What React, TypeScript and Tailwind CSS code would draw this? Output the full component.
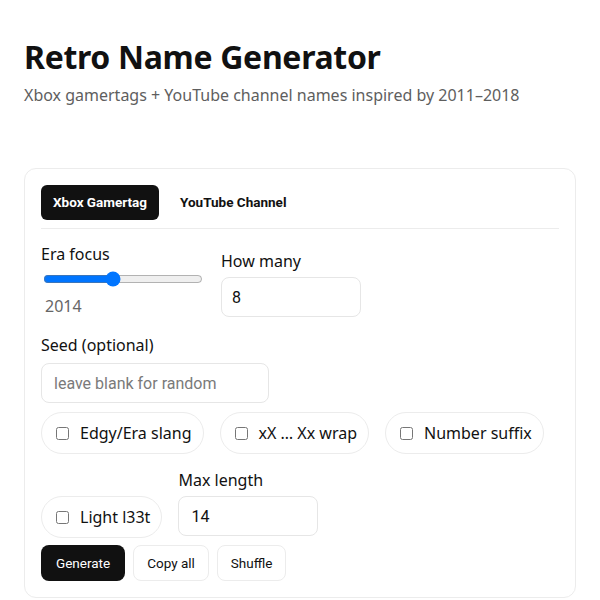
import { useState } from "react";

const pill =
  "flex items-center gap-[11px] rounded-full border border-[#ececec] bg-white py-2 pl-[14px] pr-[11px] text-base leading-6 text-[#111]";
const field =
  "h-10 rounded-lg border border-[#e6e6e6] bg-white px-3 text-base text-[#111] outline-none placeholder:text-[#7a7a7a] font-['Roboto',sans-serif]";

function Check({ label }: { label: string }) {
  return (
    <label className={pill}>
      <input type="checkbox" className="m-0 size-[13px]" />
      <span>{label}</span>
    </label>
  );
}

export default function App() {
  const [era, setEra] = useState(2014);
  const [tab, setTab] = useState("xbox");

  return (
    <main className="min-h-[600px] bg-white px-6 pt-[38px] font-['Noto_Sans',sans-serif] text-[#111]">
      <h1 className="text-[32px] leading-[38px] font-bold tracking-[-0.01em]">
        Retro Name Generator
      </h1>
      <p className="mt-[7px] text-base leading-6 text-[#5e5e5e]">
        Xbox gamertags + YouTube channel names inspired by 2011–2018
      </p>

      <section className="mt-[61px] rounded-xl border border-[#ececec] p-4">
        <div className="flex gap-[9px] border-b border-[#ececec] pb-2">
          {[
            ["xbox", "Xbox Gamertag"],
            ["yt", "YouTube Channel"],
          ].map(([id, name]) => (
            <button
              key={id}
              type="button"
              onClick={() => setTab(id)}
              className={
                "h-[35px] rounded-md px-3 font-['Roboto',sans-serif] text-[13.5px] font-bold " +
                (tab === id ? "bg-[#111] text-white" : "bg-transparent text-[#111]")
              }
            >
              {name}
            </button>
          ))}
        </div>

        <div className="mt-[13px] flex items-end gap-[18px]">
          <div className="flex flex-col">
            <span className="leading-6">Era focus</span>
            <input
              type="range"
              min={2011}
              max={2018}
              value={era}
              onChange={(e) => setEra(Number(e.target.value))}
              className="mt-[5px] ml-[2px] w-[160px]"
            />
            <span className="mt-[8px] ml-1 text-base leading-[22px] text-[#666]">{era}</span>
          </div>
          <div className="flex flex-col gap-[4px]">
            <span className="leading-6">How many</span>
            <input className={field + " w-[140px] px-[10px]"} defaultValue="8" />
          </div>
        </div>

        <div className="mt-[16px] flex flex-col gap-[6px]">
          <span className="leading-6">Seed (optional)</span>
          <input className={field + " w-[228px]"} placeholder="leave blank for random" />
        </div>

        <div className="mt-[9px] flex flex-wrap items-end gap-x-4 gap-y-[14px]">
          <Check label="Edgy/Era slang" />
          <Check label="xX … Xx wrap" />
          <Check label="Number suffix" />
          <Check label="Light l33t" />
          <div className="flex flex-col gap-[4px] pb-[2px]">
            <span className="leading-6">Max length</span>
            <input className={field + " w-[140px]"} defaultValue="14" />
          </div>
        </div>

        <div className="mt-[7px] flex gap-[8px] font-['Roboto',sans-serif] text-[13.5px]">
          <button type="button" className="h-9 rounded-lg bg-[#111] px-[15px] text-white">
            Generate
          </button>
          <button type="button" className="h-9 rounded-lg border border-[#ececec] bg-white px-[13px]">
            Copy all
          </button>
          <button type="button" className="h-9 rounded-lg border border-[#ececec] bg-white px-[13px]">
            Shuffle
          </button>
        </div>
      </section>
    </main>
  );
}
